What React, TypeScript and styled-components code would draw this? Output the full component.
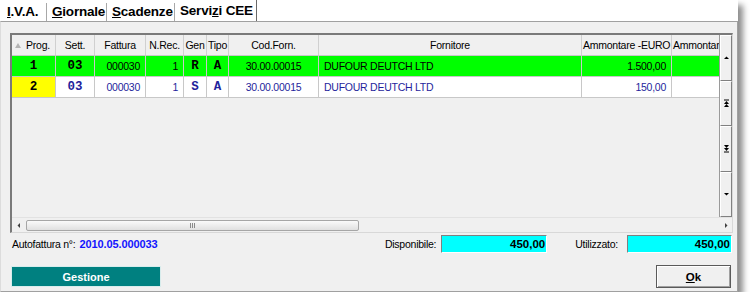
import styled, { createGlobalStyle } from "styled-components";

const GlobalStyle = createGlobalStyle`
  html, body {
    margin: 0;
    padding: 0;
    background: #ffffff;
  }
  body {
    font-family: "Liberation Sans", Arial, sans-serif;
    font-size: 10.5px;
    letter-spacing: -0.25px;
    color: #000;
  }
`;

type Align = "left" | "center" | "right";

interface Column {
  label: string;
  width: number;
  align: Align;
  mono?: boolean;
}

const columns: Column[] = [
  { label: "Prog.", width: 44, align: "center", mono: true },
  { label: "Sett.", width: 39, align: "center", mono: true },
  { label: "Fattura", width: 51, align: "right" },
  { label: "N.Rec.", width: 38, align: "right" },
  { label: "Gen", width: 23, align: "center", mono: true },
  { label: "Tipo", width: 22, align: "center", mono: true },
  { label: "Cod.Forn.", width: 90, align: "center" },
  { label: "Fornitore", width: 263, align: "left" },
  { label: "Ammontare -EURO", width: 90, align: "right" },
  { label: "Ammontare", width: 48, align: "right" },
];

const rows = [
  {
    bg: "#00ff00",
    firstBg: "#00ff00",
    color: "#000000",
    cells: ["1", "03", "000030", "1", "R", "A", "30.00.00015", "DUFOUR DEUTCH LTD", "1.500,00", ""],
  },
  {
    bg: "#ffffff",
    firstBg: "#ffff00",
    color: "#1f1f9c",
    cells: ["2", "03", "000030", "1", "S", "A", "30.00.00015", "DUFOUR DEUTCH LTD", "150,00", ""],
  },
];

export default function App() {
  return (
    <>
      <GlobalStyle />
      <Window>
        <TabStrip>
          <Tab $width={45}>
            <Key>I</Key>.V.A.
          </Tab>
          <Tab $width={60}>
            <Key>G</Key>iornale
          </Tab>
          <Tab $width={68}>
            <Key>S</Key>cadenze
          </Tab>
          <Tab $width={82} $active>
            Servi<Key>z</Key>i CEE
          </Tab>
        </TabStrip>
        <Page>
          <GridFrame>
            <GridMain>
              <TableArea>
                <HeaderRow>
                  {columns.map((c, i) => (
                    <HeaderCell key={c.label + i} $width={c.width} $sorted={i === 0}>
                      {i === 0 && (
                        <SortMark width="6" height="5" viewBox="0 0 6 5">
                          <polygon points="0,5 3,0 6,5" fill="#b4b4b4" />
                        </SortMark>
                      )}
                      {c.label}
                    </HeaderCell>
                  ))}
                </HeaderRow>
                {rows.map((r, ri) => (
                  <Row key={ri} $bg={r.bg}>
                    {r.cells.map((v, ci) => (
                      <Cell
                        key={ci}
                        $width={columns[ci].width}
                        $align={columns[ci].align}
                        $mono={!!columns[ci].mono}
                        $bg={ci === 0 ? r.firstBg : r.bg}
                        $color={ci === 0 ? "#000000" : r.color}
                      >
                        {v}
                      </Cell>
                    ))}
                  </Row>
                ))}
              </TableArea>
              <VScroll>
                <VButton>
                  <svg width="7" height="6" viewBox="0 0 7 6">
                    <polygon points="1,4 3.5,1.5 6,4" fill="#000" />
                  </svg>
                </VButton>
                <VButton>
                  <svg width="7" height="8" viewBox="0 0 7 8">
                    <rect x="1" y="0.5" width="5" height="1" fill="#000" />
                    <polygon points="1,5 3.5,2 6,5" fill="#000" />
                    <polygon points="1,8 3.5,5 6,8" fill="#000" />
                  </svg>
                </VButton>
                <VButton>
                  <svg width="7" height="8" viewBox="0 0 7 8">
                    <polygon points="1,0 3.5,3 6,0" fill="#000" />
                    <polygon points="1,3 3.5,6 6,3" fill="#000" />
                    <rect x="1" y="6.5" width="5" height="1" fill="#000" />
                  </svg>
                </VButton>
                <VButton>
                  <svg width="7" height="6" viewBox="0 0 7 6">
                    <polygon points="1,2 3.5,4.5 6,2" fill="#000" />
                  </svg>
                </VButton>
              </VScroll>
            </GridMain>
            <HScroll>
              <HArrow>
                <svg width="5" height="7" viewBox="0 0 5 7">
                  <polygon points="4,1 1.5,3.5 4,6" fill="#404040" />
                </svg>
              </HArrow>
              <Thumb>
                <Grip />
                <Grip />
                <Grip />
              </Thumb>
              <Track />
              <HArrow>
                <svg width="5" height="7" viewBox="0 0 5 7">
                  <polygon points="1,1 3.5,3.5 1,6" fill="#404040" />
                </svg>
              </HArrow>
            </HScroll>
          </GridFrame>
          <InfoRow>
            <InvoiceInfo>
              <Label $after={4}>Autofattura n°:</Label>
              <InvoiceNumber>2010.05.000033</InvoiceNumber>
            </InvoiceInfo>
            <Label $after={5}>Disponibile:</Label>
            <AmountBox $width={106}>450,00</AmountBox>
            <Label $gap={28} $after={9}>Utilizzato:</Label>
            <AmountBox $width={105}>450,00</AmountBox>
          </InfoRow>
          <ButtonRow>
            <TealButton>Gestione</TealButton>
            <OkButton>
              <Key>O</Key>k
            </OkButton>
          </ButtonRow>
        </Page>
      </Window>
    </>
  );
}

const Window = styled.div`
  width: 738px;
  height: 292px;
  display: flex;
  flex-direction: column;
  background: #ffffff;
  box-shadow: 5px 5px 6px rgba(0, 0, 0, 0.45);
`;

const TabStrip = styled.div`
  height: 21px;
  display: flex;
  align-items: flex-end;
  padding-left: 2px;
  background: #ffffff;
`;

const Tab = styled.div<{ $width: number; $active?: boolean }>`
  box-sizing: border-box;
  width: ${(p) => p.$width}px;
  height: ${(p) => (p.$active ? 21 : 18)}px;
  padding: ${(p) => (p.$active ? "3px 0 0 4px" : "1px 0 0 4px")};
  border-left: 1px solid #ffffff;
  border-right: 1px solid ${(p) => (p.$active ? "#696969" : "#a8a8a8")};
  font-size: 13.5px;
  letter-spacing: -0.2px;
  font-weight: bold;
  line-height: 16px;
  white-space: nowrap;
  color: #000;
`;

const Key = styled.span`
  text-decoration: underline;
`;

const Page = styled.div`
  flex: 1;
  display: flex;
  flex-direction: column;
  background: #f0f0f0;
  border-top: 1px solid #a0a0a0;
  border-left: 1px solid #dcdcdc;
  border-right: 1px solid #a0a0a0;
  border-bottom: 1px solid #a0a0a0;
  padding: 11px 4px 0 9px;
`;

const GridFrame = styled.div`
  box-sizing: border-box;
  height: 200px;
  display: flex;
  flex-direction: column;
  border-top: 2px solid #7a7a7a;
  border-left: 2px solid #7a7a7a;
  border-right: 1px solid #d8d8d8;
  border-bottom: 1px solid #d8d8d8;
  background: #f0f0f0;
`;

const GridMain = styled.div`
  flex: 1;
  display: flex;
  min-height: 0;
`;

const TableArea = styled.div`
  flex: 1;
  overflow: hidden;
`;

const HeaderRow = styled.div`
  display: flex;
  height: 20px;
  border-bottom: 1px solid #c8c8c8;
  background: #f0f0f0;
`;

const HeaderCell = styled.div<{ $width: number; $sorted: boolean }>`
  position: relative;
  box-sizing: border-box;
  flex: 0 0 ${(p) => p.$width}px;
  width: ${(p) => p.$width}px;
  overflow: hidden;
  white-space: nowrap;
  text-align: center;
  line-height: 20px;
  padding: 0 1px 0 ${(p) => (p.$sorted ? 10 : 1)}px;
  border-right: 1px solid #d0d0d0;
`;

const SortMark = styled.svg`
  position: absolute;
  left: 3px;
  top: 8px;
`;

const Row = styled.div<{ $bg: string }>`
  display: flex;
  height: 20px;
  border-bottom: 1px solid #c8c8c8;
  background: ${(p) => p.$bg};
`;

const Cell = styled.div<{
  $width: number;
  $align: Align;
  $mono: boolean;
  $bg: string;
  $color: string;
}>`
  box-sizing: border-box;
  flex: 0 0 ${(p) => p.$width}px;
  width: ${(p) => p.$width}px;
  overflow: hidden;
  white-space: nowrap;
  text-align: ${(p) => p.$align};
  background: ${(p) => p.$bg};
  color: ${(p) => p.$color};
  border-right: 1px solid #c8c8c8;
  padding: 0 5px;
  line-height: 20px;
  font-family: ${(p) =>
    p.$mono ? `"Liberation Mono", "Courier New", monospace` : `"Liberation Sans", Arial, sans-serif`};
  font-size: ${(p) => (p.$mono ? "12.5px" : "10.5px")};
  letter-spacing: ${(p) => (p.$mono ? "0" : "-0.25px")};
  font-weight: ${(p) => (p.$mono ? "bold" : "normal")};
`;

const VScroll = styled.div`
  width: 12px;
  display: flex;
  flex-direction: column;
  border-left: 1px solid #9a9a9a;
`;

const VButton = styled.div`
  flex: 1;
  display: flex;
  align-items: center;
  justify-content: center;
  background: #f0f0f0;
  border-top: 1px solid #ffffff;
  border-left: 1px solid #ffffff;
  border-right: 1px solid #808080;
  border-bottom: 1px solid #808080;
`;

const HScroll = styled.div`
  height: 14px;
  display: flex;
  align-items: center;
  border-top: 1px solid #e2e2e2;
  background: #f0f0f0;
`;

const HArrow = styled.div`
  width: 12px;
  height: 12px;
  display: flex;
  align-items: center;
  justify-content: center;
`;

const Thumb = styled.div`
  box-sizing: border-box;
  width: 333px;
  height: 11px;
  margin-left: 2px;
  display: flex;
  align-items: center;
  justify-content: center;
  gap: 1px;
  border: 1px solid #a6a6a6;
  border-radius: 2px;
  background: linear-gradient(#fafafa, #e0e0e0);
`;

const Grip = styled.div`
  width: 1px;
  height: 5px;
  background: #8a8a8a;
`;

const Track = styled.div`
  flex: 1;
`;

const InfoRow = styled.div`
  height: 18px;
  margin-top: 2px;
  display: flex;
  align-items: center;
  padding: 0 1px 0 2px;
`;

const InvoiceInfo = styled.div`
  flex: 1;
  display: flex;
  align-items: center;
`;

const Label = styled.span<{ $gap?: number; $after: number }>`
  color: #000;
  margin-left: ${(p) => p.$gap ?? 0}px;
  margin-right: ${(p) => p.$after}px;
  white-space: nowrap;
`;

const InvoiceNumber = styled.span`
  font-size: 11px;
  letter-spacing: -0.1px;
  font-weight: bold;
  color: #1414ff;
`;

const AmountBox = styled.div<{ $width: number }>`
  box-sizing: border-box;
  width: ${(p) => p.$width}px;
  height: 18px;
  background: #00ffff;
  border-top: 1px solid #808080;
  border-left: 1px solid #808080;
  border-right: 1px solid #ffffff;
  border-bottom: 1px solid #ffffff;
  text-align: right;
  padding-right: 1px;
  font-size: 11.5px;
  letter-spacing: 0;
  font-weight: bold;
  line-height: 16px;
`;

const ButtonRow = styled.div`
  margin-top: 12px;
  display: flex;
  align-items: center;
  justify-content: space-between;
  padding: 0 2px 0 1px;
`;

const TealButton = styled.div`
  box-sizing: border-box;
  width: 150px;
  height: 21px;
  display: flex;
  align-items: center;
  justify-content: center;
  background: #008080;
  border: 1px solid #d8ecec;
  color: #ffffff;
  font-size: 11px;
  letter-spacing: 0;
  font-weight: bold;
`;

const OkButton = styled.div`
  box-sizing: border-box;
  width: 75px;
  height: 23px;
  display: flex;
  align-items: center;
  justify-content: center;
  background: #f0f0f0;
  border: 1px solid #5a5a5a;
  box-shadow: inset 1px 1px 0 #ffffff, inset -1px -1px 0 #a0a0a0;
  font-size: 11.5px;
  letter-spacing: 0;
  font-weight: bold;
  color: #000;
`;
